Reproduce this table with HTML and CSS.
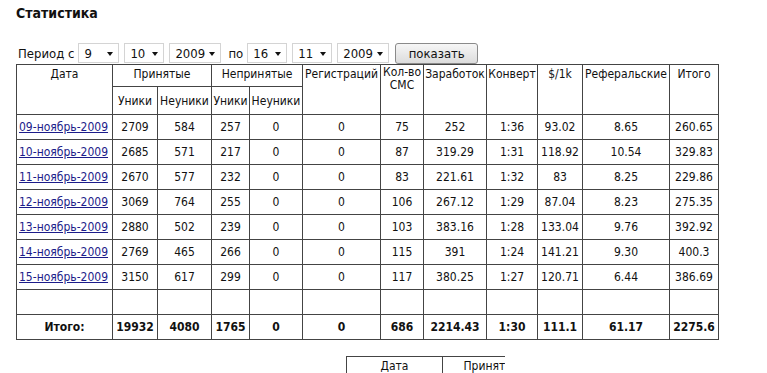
FILE: index.html
```html
<!DOCTYPE html>
<html>
<head>
<meta charset="utf-8">
<link rel="stylesheet" href="styles.css">
</head>
<body>
<div class="page">
  <h1 class="title">Статистика</h1>
  <div class="period">
    <span class="lbl">Период с</span>
    <span class="sel w41"><span class="val">9</span><span class="arr"></span></span>
    <span class="sel w40"><span class="val">10</span><span class="arr"></span></span>
    <span class="sel w52"><span class="val">2009</span><span class="arr"></span></span>
    <span class="lbl">по</span>
    <span class="sel w40"><span class="val">16</span><span class="arr"></span></span>
    <span class="sel w40"><span class="val">11</span><span class="arr"></span></span>
    <span class="sel w52"><span class="val">2009</span><span class="arr"></span></span>
    <button class="btn">показать</button>
  </div>
  <table class="stats">
    <colgroup>
      <col style="width:96px"><col style="width:45px"><col style="width:54px"><col style="width:38px"><col style="width:53px"><col style="width:78px"><col style="width:43px"><col style="width:63px"><col style="width:51px"><col style="width:45px"><col style="width:87px"><col style="width:49px">
    </colgroup>
    <thead>
      <tr class="h1">
        <th rowspan="2">Дата</th>
        <th colspan="2">Принятые</th>
        <th colspan="2">Непринятые</th>
        <th rowspan="2">Регистраций</th>
        <th rowspan="2" class="sms"><span class="sms-l">Кол-во</span><span class="sms-l">СМС</span></th>
        <th rowspan="2">Заработок</th>
        <th rowspan="2">Конверт</th>
        <th rowspan="2">$/1k</th>
        <th rowspan="2">Реферальские</th>
        <th rowspan="2">Итого</th>
      </tr>
      <tr class="h2">
        <th>Уники</th><th>Неуники</th><th>Уники</th><th>Неуники</th>
      </tr>
    </thead>
    <tbody>
      <tr><td class="d"><a href="#">09-ноябрь-2009</a></td><td>2709</td><td>584</td><td>257</td><td>0</td><td>0</td><td>75</td><td>252</td><td>1:36</td><td>93.02</td><td>8.65</td><td>260.65</td></tr>
      <tr><td class="d"><a href="#">10-ноябрь-2009</a></td><td>2685</td><td>571</td><td>217</td><td>0</td><td>0</td><td>87</td><td>319.29</td><td>1:31</td><td>118.92</td><td>10.54</td><td>329.83</td></tr>
      <tr><td class="d"><a href="#">11-ноябрь-2009</a></td><td>2670</td><td>577</td><td>232</td><td>0</td><td>0</td><td>83</td><td>221.61</td><td>1:32</td><td>83</td><td>8.25</td><td>229.86</td></tr>
      <tr><td class="d"><a href="#">12-ноябрь-2009</a></td><td>3069</td><td>764</td><td>255</td><td>0</td><td>0</td><td>106</td><td>267.12</td><td>1:29</td><td>87.04</td><td>8.23</td><td>275.35</td></tr>
      <tr><td class="d"><a href="#">13-ноябрь-2009</a></td><td>2880</td><td>502</td><td>239</td><td>0</td><td>0</td><td>103</td><td>383.16</td><td>1:28</td><td>133.04</td><td>9.76</td><td>392.92</td></tr>
      <tr><td class="d"><a href="#">14-ноябрь-2009</a></td><td>2769</td><td>465</td><td>266</td><td>0</td><td>0</td><td>115</td><td>391</td><td>1:24</td><td>141.21</td><td>9.30</td><td>400.3</td></tr>
      <tr><td class="d"><a href="#">15-ноябрь-2009</a></td><td>3150</td><td>617</td><td>299</td><td>0</td><td>0</td><td>117</td><td>380.25</td><td>1:27</td><td>120.71</td><td>6.44</td><td>386.69</td></tr>
      <tr><td></td><td></td><td></td><td></td><td></td><td></td><td></td><td></td><td></td><td></td><td></td><td></td></tr>
      <tr class="total"><td>Итого:</td><td>19932</td><td>4080</td><td>1765</td><td>0</td><td>0</td><td>686</td><td>2214.43</td><td>1:30</td><td>111.1</td><td>61.17</td><td>2275.6</td></tr>
    </tbody>
  </table>
  <div class="clip">
    <table class="stats second">
      <colgroup>
        <col style="width:96px"><col style="width:45px"><col style="width:54px">
      </colgroup>
      <thead>
        <tr class="h1">
          <th>Дата</th>
          <th colspan="2">Принятые</th>
        </tr>
      </thead>
    </table>
  </div>
</div>
</body>
</html>
```

FILE: styles.css
```css
html, body {
  margin: 0;
  padding: 0;
  background: #fff;
}
.page {
  padding: 0 0 0 16px;
  font-family: "DejaVu Sans Condensed", "DejaVu Sans", sans-serif;
  font-size: 12px;
  color: #111;
}
.title {
  margin: 0;
  padding-top: 5px;
  font-size: 14px;
  font-weight: bold;
  line-height: 17px;
  height: 37px;
}
.period {
  display: flex;
  align-items: center;
  height: 22px;
  font-size: 13px;
}
.lbl {
  margin: 0 4px 0 2px;
}
.sel {
  display: flex;
  align-items: center;
  justify-content: space-between;
  box-sizing: border-box;
  height: 20px;
  margin-right: 5px;
  padding: 0 5px 0 5px;
  border: 1px solid #d4d4d4;
  background: #fff;
  font-size: 13px;
}
.w41 { width: 41px; }
.w40 { width: 40px; }
.w52 { width: 52px; }
.arr {
  width: 0;
  height: 0;
  border-left: 3px solid transparent;
  border-right: 3px solid transparent;
  border-top: 4px solid #111;
  margin-top: 1px;
}
.btn {
  box-sizing: border-box;
  width: 83px;
  height: 21px;
  margin: 0 0 0 1px;
  padding: 0;
  font-family: "DejaVu Sans Condensed", "DejaVu Sans", sans-serif;
  font-size: 13px;
  color: #111;
  border: 1px solid #8a8a8a;
  border-radius: 3px;
  background: linear-gradient(#f6f6f6, #dcdcdc);
}
.stats {
  border-collapse: collapse;
  table-layout: fixed;
  width: 703px;
  font-size: 12px;
}
.stats th, .stats td {
  border: 1px solid #444;
  padding: 0;
  text-align: center;
  font-weight: normal;
  overflow: hidden;
  white-space: nowrap;
}
.stats .h1 { height: 22px; }
.stats .h1 th {
  vertical-align: top;
  padding-top: 2px;
}
.stats .h1 th.sms {
  padding-top: 1px;
}
.sms-l {
  display: block;
  height: 13px;
  line-height: 13px;
  font-size: 12px;
}
.stats .h2 { height: 28px; }
.stats .h2 th { vertical-align: middle; }
.stats tbody tr { height: 25px; }
.stats td.d {
  text-align: left;
  padding-left: 2px;
}
.stats a {
  color: #1c1c8a;
}
.stats .total td {
  font-weight: bold;
}
.clip {
  margin: 16px 0 0 330px;
  width: 159px;
  overflow: hidden;
}
.second {
  width: 196px;
}
.second .h1 th {
  border-bottom: none;
}
```
